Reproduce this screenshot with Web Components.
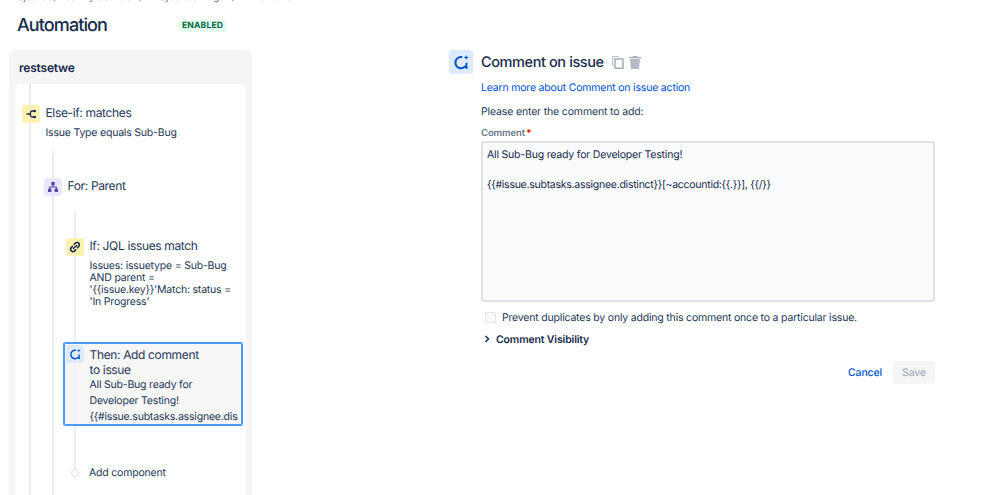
<!DOCTYPE html>
<html lang="en">
<head>
<meta charset="utf-8">
<title>Automation</title>
<style>
  html, body { margin: 0; height: 495px; overflow: hidden; background: #fff; }
  body { font-family: Inter, "Liberation Sans", sans-serif; color: #253858; text-rendering: geometricPrecision; }
</style>
</head>
<body>

<script>
const ICONS = {
  branch: '<path d="M4.500 9h4M12.500 6H10a1.500 1.500 0 0 0-1.500 1.500v3A1.500 1.500 0 0 0 10 12h2.500" fill="none" stroke="#172b4d" stroke-width="1.3"/><circle cx="12.700" cy="6" r="1.300" fill="#172b4d"/><circle cx="12.700" cy="12" r="1.300" fill="#172b4d"/>',
  tree: '<g fill="#5243aa"><rect x="7.300" y="4" width="3.400" height="3.200" rx=".6"/><rect x="4" y="10.800" width="3.400" height="3.200" rx=".6"/><rect x="10.600" y="10.800" width="3.400" height="3.200" rx=".6"/></g><path d="M9 7v2M5.700 11V9h6.600v2" fill="none" stroke="#5243aa" stroke-width="1.100"/>',
  link: '<g fill="none" stroke="#172b4d" stroke-width="1.500" stroke-linecap="round"><path d="M8.200 6.300l1.200-1.200a2.300 2.300 0 0 1 3.300 3.300L11.500 9.600"/><path d="M9.800 11.700l-1.200 1.200a2.300 2.300 0 0 1-3.300-3.300L6.500 8.400"/><path d="M7.500 10.500l3-3"/></g>',
  comment: '<path d="M10 5.400A4.200 4.200 0 1 0 11.800 12.600L13.400 13.400 12.900 11.300A4.200 4.200 0 0 0 13.200 9.600" fill="none" stroke="#0052cc" stroke-width="1.400" stroke-linejoin="round"/><path d="M12.900 3.700l.5 1.400 1.400.5-1.400.5-.5 1.400-.5-1.400-1.400-.5 1.400-.5z" fill="#0052cc"/>'
};

const svgIcon = (name, size) =>
  `<svg width="${size}" height="${size}" viewBox="0 0 18 18">${ICONS[name]}</svg>`;

// breadcrumb + page title row
class PageHeader extends HTMLElement {
  constructor() {
    super();
    this.attachShadow({ mode: 'open' });
    this.shadowRoot.innerHTML = `
      <style>
        :host { display: block; margin-top: -10px; }
        nav { display: flex; gap: 7px; padding-left: 7px; font-size: 10.5px; line-height: 14px; letter-spacing: -.1px; color: #6b778c; }
        .row { display: flex; align-items: center; margin-top: 8px; padding-left: 17px; height: 28px; }
        h1 { margin: 0; width: 162px; font-size: 18px; line-height: 28px; font-weight: 500; letter-spacing: -.9px; color: #172b4d; }
        .badge { margin-top: -1px; padding: 0 3px; height: 12px; line-height: 12px; border-radius: 3px;
                 background: #e3fcef; color: #006644; font-size: 8.5px; font-weight: 700; letter-spacing: .2px; }
      </style>
      <nav><span>Projects</span><span>/</span><span>Sanity Source</span><span>/</span><span>Project settings</span><span>/</span><span>Automation</span></nav>
      <div class="row"><h1>Automation</h1><span class="badge">ENABLED</span></div>
    `;
  }
}

// grey rounded box with the rule name and a white tree area
class RulePanel extends HTMLElement {
  constructor() {
    super();
    this.attachShadow({ mode: 'open' });
    this.shadowRoot.innerHTML = `
      <style>
        :host { display: block; width: 243px; box-sizing: border-box; padding: 0 6px; border-radius: 6px 6px 0 0; background: #f4f5f7; height: 460px; }
        h2 { margin: 0; padding: 9px 4px 0; height: 25px; font-size: 12px; line-height: 17px; font-weight: 600; letter-spacing: -.2px; color: #172b4d; }
        .tree { background: #fff; border-radius: 5px 5px 0 0; height: 426px; padding-left: 14px; }
      </style>
      <h2></h2>
      <div class="tree"><slot></slot></div>
    `;
    this.shadowRoot.querySelector('h2').textContent = this.getAttribute('name');
  }
}

// vertical connector line, its children sit across it
class RuleBranch extends HTMLElement {
  constructor() {
    super();
    this.attachShadow({ mode: 'open' });
    this.shadowRoot.innerHTML = `
      <style>
        :host { display: block; border-left: 2px solid #ebecf0; border-image: linear-gradient(var(--fade, #ebecf0), #ebecf0 10px) 1;
                padding-top: var(--top, 0); margin-top: var(--gap, 0); margin-left: var(--left, 0); height: var(--h, auto); }
        .inner { margin-left: var(--in, -10px); }
      </style>
      <div class="inner"><slot></slot></div>
    `;
  }
}

// one component in the rule: coloured icon, title, description
class RuleStep extends HTMLElement {
  constructor() {
    super();
    this.attachShadow({ mode: 'open' });
    this.shadowRoot.innerHTML = `
      <style>
        :host { display: grid; grid-template-columns: 18px auto; column-gap: 5.5px; }
        .icon { width: 18px; height: 18px; border-radius: 3px; background: var(--tint, #fff0b3); display: flex; }
        .title { font-size: 12px; line-height: 15px; letter-spacing: -.35px; color: #253858; }
        .desc { grid-column: 2; font-size: 10.5px; line-height: 12px; margin-top: 4px; letter-spacing: -.2px; color: #253858; }
      </style>
      <div class="icon">${svgIcon(this.getAttribute('icon'), 18)}</div>
      <div class="title">${this.getAttribute('title')}</div>
      <div class="desc"><slot></slot></div>
    `;
  }
}

// selected step in the tree
class RuleCard extends HTMLElement {
  constructor() {
    super();
    this.attachShadow({ mode: 'open' });
    this.shadowRoot.innerHTML = `
      <style>
        :host { display: grid; grid-template-columns: 18px auto; grid-template-rows: 30px auto; column-gap: 5.5px; box-sizing: border-box; width: 180px; height: 84px;
                margin-left: -3px; padding: 2px 2px 0; border: 1px solid #4c9aff; border-radius: 2px; background: rgba(244,244,244,.85); outline: 1px solid #4c9aff; outline-offset: -2px; overflow: hidden; }
        .icon { width: 18px; height: 18px; border-radius: 3px; background: #deebff; display: flex; }
        .title { font-size: 12px; line-height: 15px; padding-top: 2px; letter-spacing: -.35px; color: #253858; }
        .desc { grid-column: 2; font-size: 10.5px; line-height: 16px; margin-top: 2px; letter-spacing: -.2px; white-space: nowrap; color: #253858; }
      </style>
      <div class="icon">${svgIcon('comment', 18)}</div>
      <div class="title">Then: Add comment<br>to issue</div>
      <div class="desc"><slot></slot></div>
    `;
  }
}

class AddComponent extends HTMLElement {
  constructor() {
    super();
    this.attachShadow({ mode: 'open' });
    this.shadowRoot.innerHTML = `
      <style>
        :host { display: flex; align-items: center; font-size: 10.5px; line-height: 14px; letter-spacing: -.2px; color: #253858; margin-left: 5px; }
        i { width: 6px; height: 6px; border: 1.5px solid #dfe1e6; border-radius: 50%; background: #fff; margin-right: 10px; }
      </style>
      <i></i><span>Add component</span>
    `;
  }
}

// right hand editor for the selected step
class CommentEditor extends HTMLElement {
  constructor() {
    super();
    this.attachShadow({ mode: 'open' });
    this.shadowRoot.innerHTML = `
      <style>
        :host { display: grid; grid-template-columns: 24px 454px; column-gap: 8px; width: 486px; font-size: 10.5px; letter-spacing: -.19px; color: #253858; }
        .big { width: 24px; height: 24px; border-radius: 3px; background: #deebff; display: flex; }
        .head { display: flex; align-items: center; height: 24px; }
        h3 { margin: 0 8px 0 0; font-size: 14.5px; font-weight: 500; letter-spacing: -.4px; color: #172b4d; }
        .head svg { margin-right: 5px; }
        a { display: block; margin-top: 5px; line-height: 18px; color: #0052cc; text-decoration: none; }
        p { margin: 6px 0 0; line-height: 18px; letter-spacing: -.15px; }
        label { display: block; margin-top: 7px; font-size: 9.5px; line-height: 12px; font-weight: 600; letter-spacing: -.1px; color: #6b778c; }
        label b { color: #de350b; margin-left: 1px; }
        .area { box-sizing: border-box; height: 161px; margin-top: 1px; padding: 4px 4px; border: 2px solid #dfe1e6; border-radius: 3px;
                background: #fafbfc; line-height: 15px; color: #172b4d; }
        .area div { height: 15px; }
        .area .code { letter-spacing: -.26px; }
        .check { display: flex; align-items: center; margin-top: 8px; height: 14px; padding-left: 4px; }
        .box { width: 9px; height: 9px; border: 1px solid #dfe1e6; border-radius: 2px; background: #fafbfc; margin-right: 6px; }
        .vis { display: flex; align-items: center; margin-top: 8px; height: 14px; padding-left: 3px; font-weight: 600; letter-spacing: -.15px; color: #172b4d; }
        .vis svg { margin-right: 6px; }
        .actions { display: flex; justify-content: flex-end; align-items: center; margin-top: 15px; letter-spacing: -.15px; }
        .cancel { color: #0052cc; font-weight: 500; margin-right: 11px; }
        .save { width: 42px; height: 23px; line-height: 23px; text-align: center; border-radius: 3px; background: #f4f5f7; color: #a5adba; font-weight: 500; }
      </style>
      <div class="big">${svgIcon('comment', 24)}</div>
      <div>
        <div class="head">
          <h3>Comment on issue</h3>
          <svg width="12" height="13" viewBox="0 0 12 13"><path d="M0 0h7v1.300H1.300V10H0z" fill="#c1c7d0"/><rect x="3" y="3" width="8" height="9.300" fill="#fff" stroke="#a5adba" stroke-width="1.500"/></svg>
          <svg width="12" height="13" viewBox="0 0 12 13"><path d="M4 0h4l.5 1H12v1.200H0V1h3.500z" fill="#a5adba"/><path d="M1 3h10l-1 10H2z" fill="#b3bac5"/></svg>
        </div>
        <a href="#">Learn more about Comment on issue action</a>
        <p>Please enter the comment to add:</p>
        <label>Comment<b>*</b></label>
        <div class="area">
          <div>All Sub-Bug ready for Developer Testing!</div>
          <div></div>
          <div class="code">{{#issue.subtasks.assignee.distinct}}[~accountid:{{.}}], {{/}}</div>
        </div>
        <div class="check"><span class="box"></span>Prevent duplicates by only adding this comment once to a particular issue.</div>
        <div class="vis"><svg width="6" height="8" viewBox="0 0 6 8"><path d="M1.500 1l3 3-3 3" fill="none" stroke="#172b4d" stroke-width="1.500"/></svg>Comment Visibility</div>
        <div class="actions"><span class="cancel">Cancel</span><span class="save">Save</span></div>
      </div>
    `;
  }
}

// top level page layout
class AutomationPage extends HTMLElement {
  constructor() {
    super();
    this.attachShadow({ mode: 'open' });
    this.shadowRoot.innerHTML = `
      <style>
        :host { display: block; }
        .cols { display: grid; grid-template-columns: 243px 486px; column-gap: 197px; padding: 10px 0 0 9px; }
      </style>
      <slot name="header"></slot>
      <div class="cols">
        <div><slot name="left"></slot></div>
        <div><slot name="right"></slot></div>
      </div>
    `;
  }
}

customElements.define('page-header', PageHeader);
customElements.define('rule-panel', RulePanel);
customElements.define('rule-branch', RuleBranch);
customElements.define('rule-step', RuleStep);
customElements.define('rule-card', RuleCard);
customElements.define('add-component', AddComponent);
customElements.define('comment-editor', CommentEditor);
customElements.define('automation-page', AutomationPage);

document.body.insertAdjacentHTML('afterbegin', `
<automation-page>
  <page-header slot="header"></page-header>
  <rule-panel slot="left" name="restsetwe">
    <rule-branch style="--top:21px;--h:405px;--in:-9px">
      <rule-step icon="branch" title="Else-if: matches" style="--tint:#fff0b3">Issue Type equals Sub-Bug</rule-step>
      <rule-branch style="--gap:8px;--left:30px;--top:31px;--h:320px;--in:-10px;--fade:#fff">
        <rule-step icon="tree" title="For: Parent" style="--tint:#eae6ff"></rule-step>
        <rule-branch style="--gap:7px;--left:30px;--top:31px;--h:233px;--in:-10px;--fade:#fff">
          <rule-step icon="link" title="If: JQL issues match" style="--tint:#fff0b3">Issues: issuetype = Sub-Bug<br>AND parent =<br>'{{issue.key}}'Match: status =<br>'In Progress'</rule-step>
          <div style="height:34px"></div>
          <rule-card>All Sub-Bug ready for<br>Developer Testing!<br>{{#issue.subtasks.assignee.dis</rule-card>
          <div style="height:40px"></div>
          <add-component></add-component>
        </rule-branch>
      </rule-branch>
    </rule-branch>
  </rule-panel>
  <comment-editor slot="right"></comment-editor>
</automation-page>`);
</script>
</body>
</html>
